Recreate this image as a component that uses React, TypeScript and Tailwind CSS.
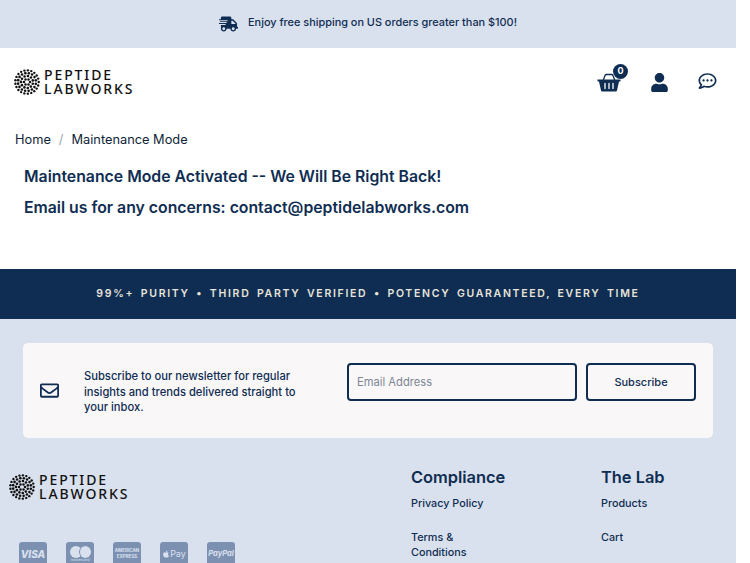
import React from 'react';
import { FaShippingFast, FaUser, FaRegCommentDots, FaRegEnvelope, FaApple } from 'react-icons/fa';

// Ring-of-dots logo mark
const LogoMark = () => {
    const rings = [
        { r: 3, n: 6, s: 1.25 },
        { r: 6, n: 11, s: 1.3 },
        { r: 9, n: 16, s: 1.3 },
        { r: 11.7, n: 21, s: 1.2 },
    ];
    return (
        <svg width="26" height="26" viewBox="-13 -13 26 26" className="shrink-0">
            {rings.map((ring, i) =>
                Array.from({ length: ring.n }).map((_, j) => {
                    const a = (j / ring.n) * Math.PI * 2 + i * 0.3;
                    return <circle key={`${i}-${j}`} cx={ring.r * Math.cos(a)} cy={ring.r * Math.sin(a)} r={ring.s} fill="#111" />;
                })
            )}
        </svg>
    );
};

const Logo = () => (
    <div className="flex items-center gap-[4px]">
        <LogoMark />
        <div className="font-['Noto_Sans',sans-serif] font-medium text-[#111] text-[14px] leading-[14px] tracking-[1.9px]">
            <div className="h-[14px]">PEPTIDE</div>
            <div className="h-[14px]">LABWORKS</div>
        </div>
    </div>
);

const Basket = () => (
    <svg width="24" height="19" viewBox="0 0 24 19" className="block">
        <path d="M6 8 L8 2.5 Q8.3 1.5 9.5 1.5 H14.5 Q15.7 1.5 16 2.5 L18 8" fill="none" stroke="#0f2d52" strokeWidth="1.3" />
        <path d="M0.5 6.5 H23.5 V8.5 H22 L20 17.5 Q19.8 18.5 18.8 18.5 H5.2 Q4.2 18.5 4 17.5 L2 8.5 H0.5 Z" fill="#0f2d52" />
        <path d="M8 10.5 V15.5 M12 10.5 V15.5 M16 10.5 V15.5" stroke="#fff" strokeWidth="1.3" strokeLinecap="round" />
    </svg>
);

const PayCard = ({ children }: { children: React.ReactNode }) => (
    <div className="w-[28px] h-[24px] rounded-[3px] bg-[#7c90b2] text-[#dae1ee] flex flex-col items-center justify-center shrink-0 overflow-hidden">
        {children}
    </div>
);

export default function App() {
    return (
        <div className="w-[736px] h-[563px] overflow-hidden bg-white text-[#0f2d52] font-['Inter',sans-serif]">
            {/* Promo bar */}
            <div className="h-[48px] bg-[#dae1ee] flex items-center justify-center gap-[10px]">
                <FaShippingFast className="w-[19px] h-[16px] text-[#0f2d52] -mt-[1px]" />
                <span className="text-[10.9px] font-medium -mt-[4px]">Enjoy free shipping on US orders greater than $100!</span>
            </div>

            {/* Header */}
            <div className="h-[68px] flex items-center justify-between pl-[14px] pr-[19px]">
                <Logo />
                <div className="flex items-center gap-[30px]">
                    <div className="relative">
                        <Basket />
                        <span className="absolute -top-[9px] -right-[7px] w-[15px] h-[15px] rounded-full bg-[#0f2d52] text-white text-[9px] font-bold flex items-center justify-center">0</span>
                    </div>
                    <FaUser className="w-[17px] h-[19px] mt-[1px]" />
                    <FaRegCommentDots className="w-[19px] h-[18px] -mt-[2px]" />
                </div>
            </div>

            {/* Breadcrumb */}
            <nav className="pl-[15px] pt-[15px] flex items-center text-[12.8px] text-[#0f1f3a] h-[32px]">
                <span>Home</span>
                <span className="mx-[8px] text-[#9aa3ad]">/</span>
                <span>Maintenance Mode</span>
            </nav>

            {/* Notice */}
            <div className="pl-[24px] pt-[13px] h-[121px] text-[15.8px] font-semibold leading-[31px]">
                <p>Maintenance Mode Activated -- We Will Be Right Back!</p>
                <p>Email us for any concerns: contact@peptidelabworks.com</p>
            </div>

            {/* Claim band */}
            <div className="h-[50px] bg-[#0f2d52] flex items-center justify-center text-[#e8e4da] text-[10.5px] font-semibold tracking-[1.7px] [word-spacing:2.2px]">
                99%+ PURITY • THIRD PARTY VERIFIED • POTENCY GUARANTEED, EVERY TIME
            </div>

            {/* Footer */}
            <div className="bg-[#dae1ee] h-[244px] pt-[24px]">
                <div className="mx-[23px] w-[690px] h-[95px] rounded-[5px] bg-[#f9f7f8] flex items-start pl-[17px] pr-[17px]">
                    <FaRegEnvelope className="w-[19px] h-[19px] shrink-0 mt-[38px]" />
                    <p className="ml-[25px] mt-[26px] w-[225px] text-[11.2px] font-medium leading-[15.5px]">
                        Subscribe to our newsletter for regular insights and trends delivered straight to your inbox.
                    </p>
                    <div className="ml-[38px] mt-[20px] flex gap-[9px]">
                        <input
                            placeholder="Email Address"
                            className="w-[230px] h-[38px] rounded-[4px] border-2 border-[#0f2d52] px-[8px] text-[11.2px] placeholder:text-[#7d8794] bg-transparent"
                        />
                        <button className="w-[110px] h-[38px] rounded-[4px] border-2 border-[#0f2d52] text-[11px] font-medium">
                            Subscribe
                        </button>
                    </div>
                </div>

                <div className="flex mt-[28px] pl-[9px]">
                    <div className="w-[402px]">
                        <div className="mt-[7px]"><Logo /></div>
                        <div className="flex gap-[19px] pl-[10px] mt-[41px]">
                            <PayCard><span className="text-[10px] font-extrabold italic">VISA</span></PayCard>
                            <PayCard>
                                <span className="flex mt-[1px]">
                                    <span className="w-[12px] h-[12px] rounded-full bg-[#dae1ee]" />
                                    <span className="w-[12px] h-[12px] rounded-full bg-[#dae1ee] -ml-[3px] border-l border-[#7c90b2]" />
                                </span>
                                <span className="text-[3.5px] leading-[5px]">mastercard</span>
                            </PayCard>
                            <PayCard>
                                <span className="text-[4.5px] font-bold leading-[6px]">AMERICAN</span>
                                <span className="text-[4.5px] font-bold leading-[6px]">EXPRESS</span>
                            </PayCard>
                            <PayCard>
                                <span className="flex items-center text-[9px]"><FaApple className="w-[8px] h-[8px]" />Pay</span>
                            </PayCard>
                            <PayCard><span className="text-[7.5px] font-bold italic">PayPal</span></PayCard>
                        </div>
                    </div>
                    <div className="w-[190px]">
                        <h3 className="text-[16.4px] font-semibold leading-[22px]">Compliance</h3>
                        <ul className="mt-[8px] text-[10.8px] font-medium leading-[15.5px]">
                            <li>Privacy Policy</li>
                            <li className="mt-[18px] w-[70px]">Terms &amp; Conditions</li>
                        </ul>
                    </div>
                    <div>
                        <h3 className="text-[16.4px] font-semibold leading-[22px]">The Lab</h3>
                        <ul className="mt-[8px] text-[10.8px] font-medium leading-[15.5px]">
                            <li>Products</li>
                            <li className="mt-[18px]">Cart</li>
                        </ul>
                    </div>
                </div>
            </div>
        </div>
    );
}
